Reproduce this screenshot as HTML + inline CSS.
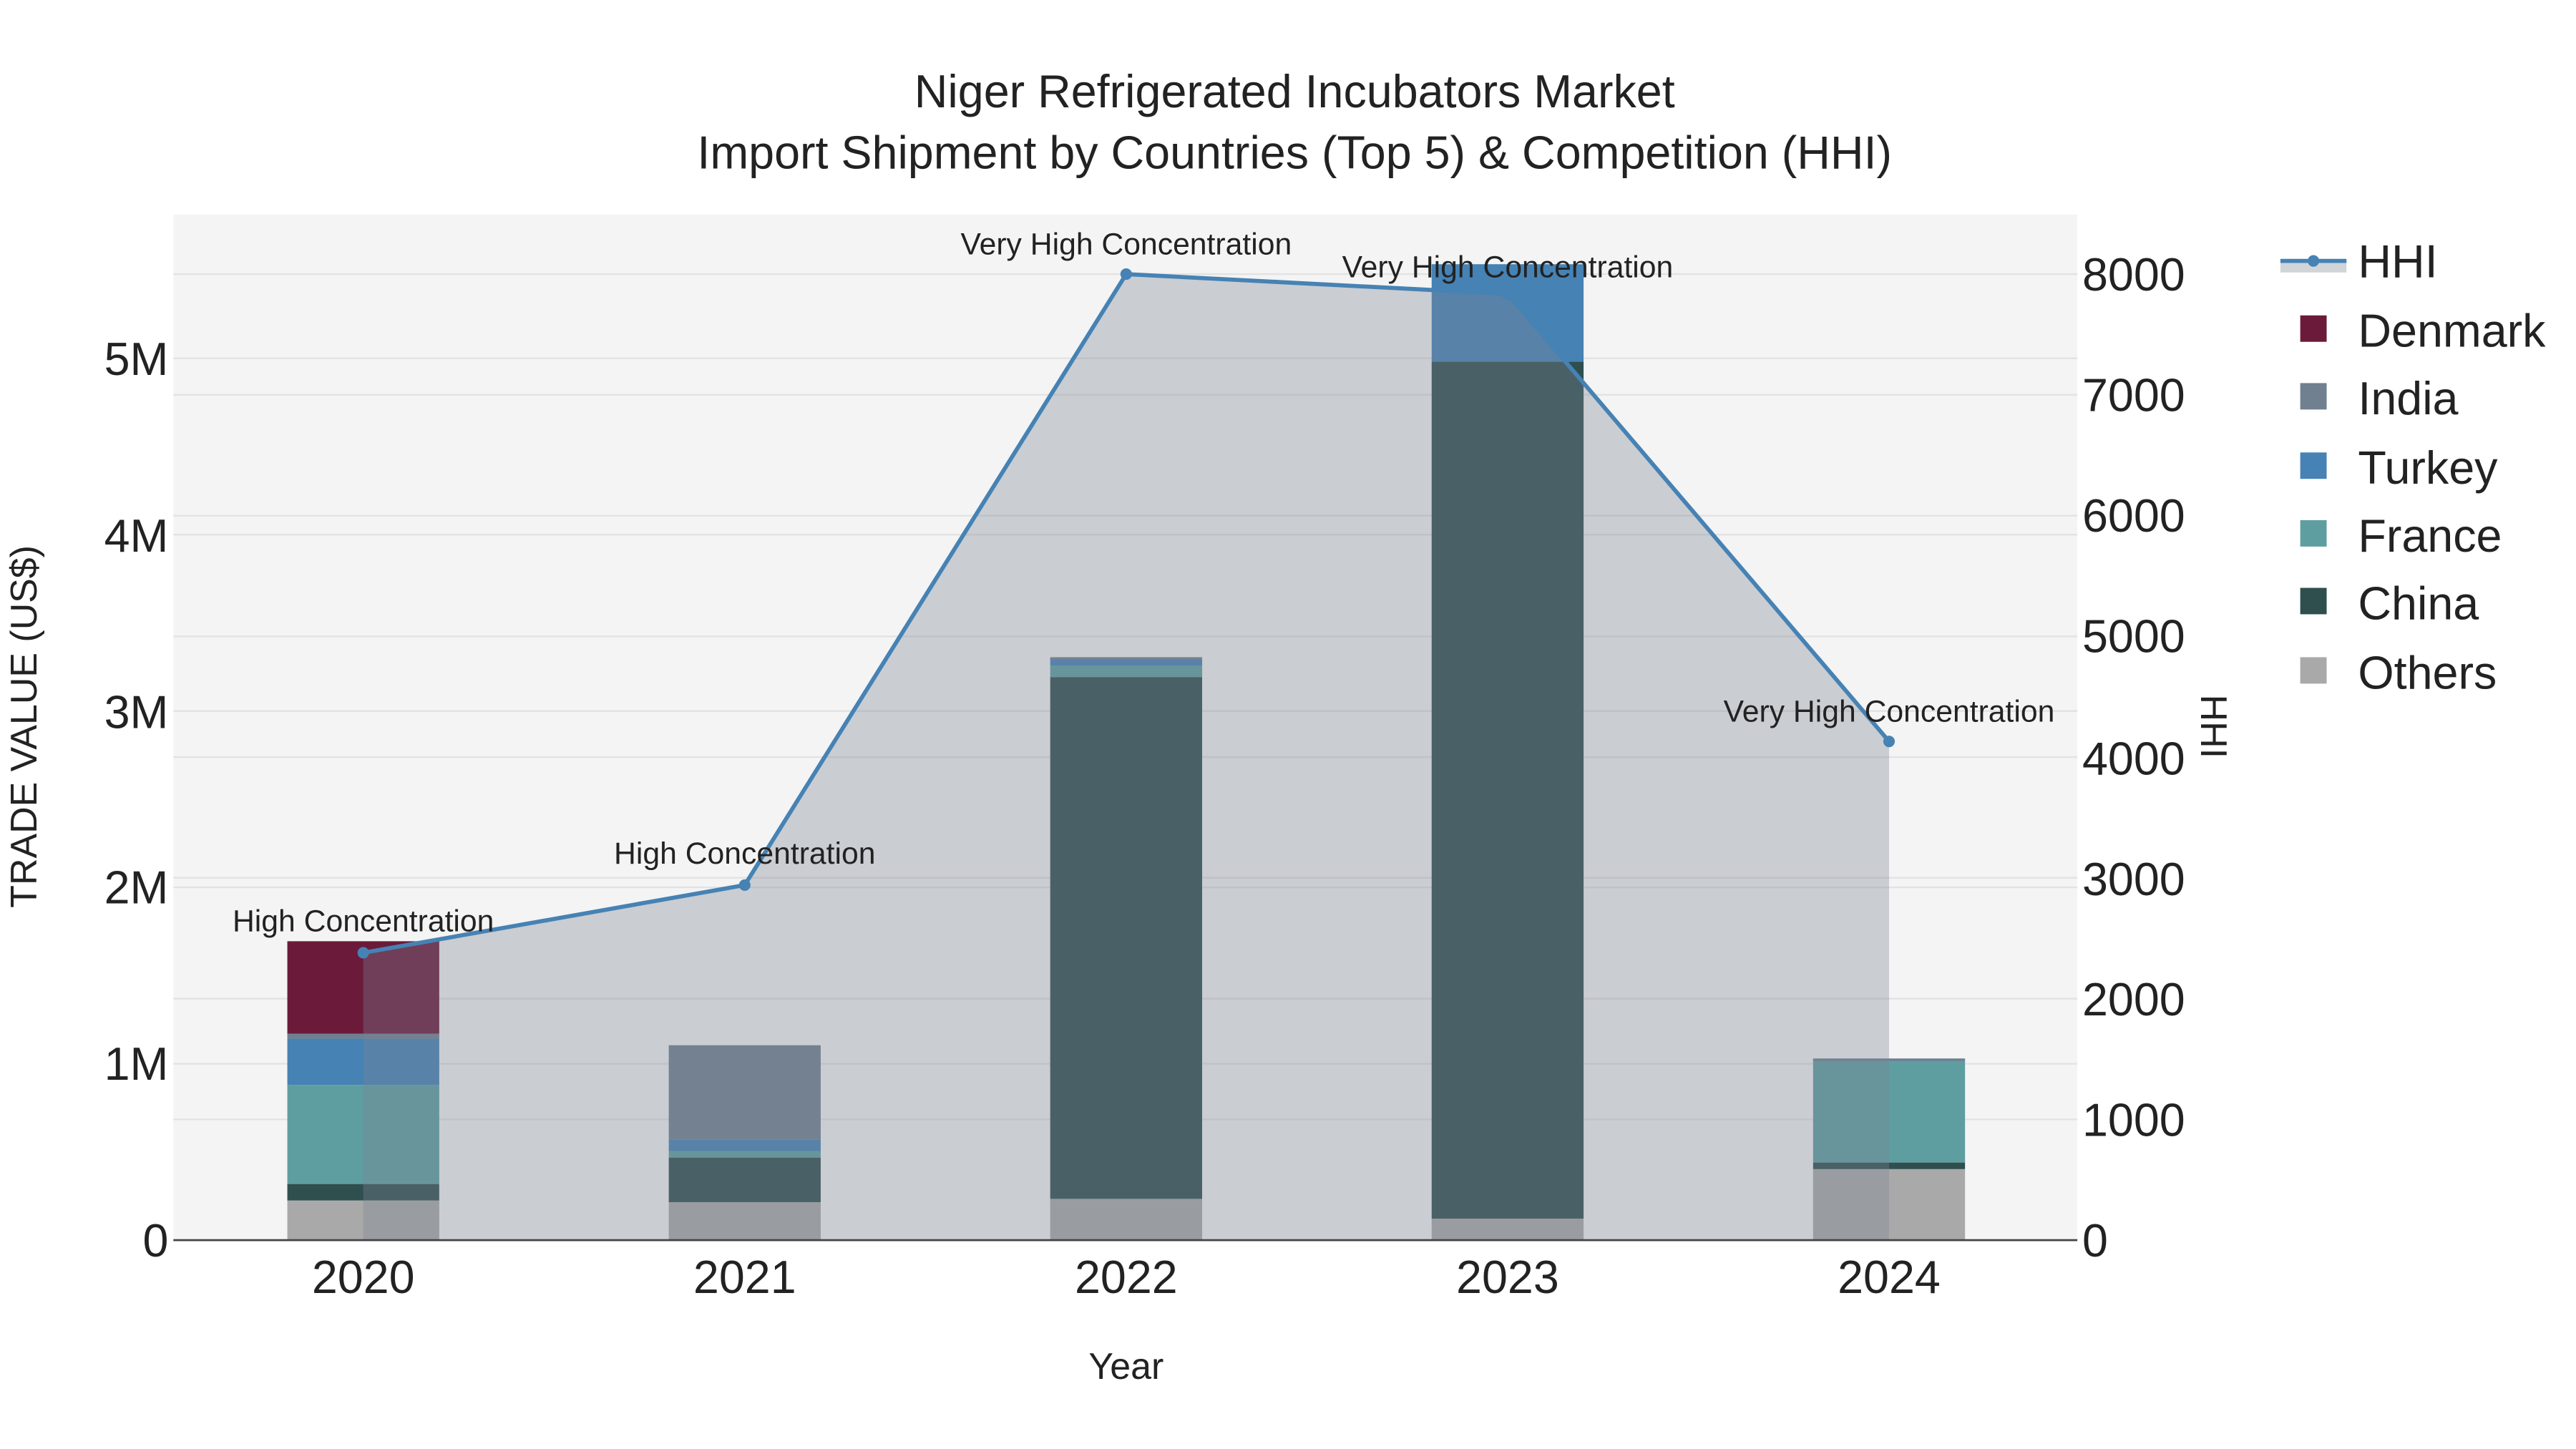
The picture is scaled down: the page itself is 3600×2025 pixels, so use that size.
<!DOCTYPE html>
<html><head><meta charset="utf-8"><style>
html,body{margin:0;padding:0;background:#fff;}
svg{display:block;}
text{font-family:"Liberation Sans",sans-serif;fill:#222;}
</style></head><body>
<svg width="3600" height="2025" viewBox="0 0 1560 877.5" xmlns="http://www.w3.org/2000/svg">
<rect x="0" y="0" width="1560" height="877.5" fill="#fff"/>
<rect x="105" y="130" width="1153" height="621" fill="#f4f4f4"/>
<g stroke="#e2e2e2" stroke-width="1">
<line x1="105" x2="1258" y1="644.2" y2="644.2"/><line x1="105" x2="1258" y1="537.4" y2="537.4"/>
<line x1="105" x2="1258" y1="430.6" y2="430.6"/><line x1="105" x2="1258" y1="323.8" y2="323.8"/>
<line x1="105" x2="1258" y1="217" y2="217"/>
<line x1="105" x2="1258" y1="677.9" y2="677.9"/><line x1="105" x2="1258" y1="604.8" y2="604.8"/>
<line x1="105" x2="1258" y1="531.6" y2="531.6"/><line x1="105" x2="1258" y1="458.5" y2="458.5"/>
<line x1="105" x2="1258" y1="385.4" y2="385.4"/><line x1="105" x2="1258" y1="312.3" y2="312.3"/>
<line x1="105" x2="1258" y1="239.1" y2="239.1"/><line x1="105" x2="1258" y1="166" y2="166"/>
</g>
<g>
<rect x="174" y="727" width="92" height="24" fill="#a9a9a9"/>
<rect x="174" y="717" width="92" height="10" fill="#2f4f4f"/>
<rect x="174" y="657" width="92" height="60" fill="#5f9ea0"/>
<rect x="174" y="629" width="92" height="28" fill="#4682b4"/>
<rect x="174" y="626" width="92" height="3" fill="#708090"/>
<rect x="174" y="570" width="92" height="56" fill="#6b1a3a"/>

<rect x="405" y="728" width="92" height="23" fill="#a9a9a9"/>
<rect x="405" y="701" width="92" height="27" fill="#2f4f4f"/>
<rect x="405" y="697" width="92" height="4" fill="#5f9ea0"/>
<rect x="405" y="690" width="92" height="7" fill="#4682b4"/>
<rect x="405" y="633" width="92" height="57" fill="#708090"/>

<rect x="636" y="726" width="92" height="25" fill="#a9a9a9"/>
<rect x="636" y="410" width="92" height="316" fill="#2f4f4f"/>
<rect x="636" y="403" width="92" height="7" fill="#5f9ea0"/>
<rect x="636" y="399" width="92" height="4" fill="#4682b4"/>
<rect x="636" y="398" width="92" height="1.5" fill="#708090"/>

<rect x="867" y="738" width="92" height="13" fill="#a9a9a9"/>
<rect x="867" y="219" width="92" height="519" fill="#2f4f4f"/>
<rect x="867" y="160" width="92" height="59" fill="#4682b4"/>

<rect x="1098" y="708" width="92" height="43" fill="#a9a9a9"/>
<rect x="1098" y="704" width="92" height="4" fill="#2f4f4f"/>
<rect x="1098" y="642" width="92" height="62" fill="#5f9ea0"/>
<rect x="1098" y="641" width="92" height="1.5" fill="#708090"/>
</g>
<path d="M220,751 L220,577 L451,536 L682,166 L913,178 L1144,449 L1144,751 Z" fill="#7b8391" fill-opacity="0.35"/>
<polyline points="220,577 451,536 682,166 913,178 1144,449" fill="none" stroke="#4682b4" stroke-width="2.5"/>
<g fill="#4682b4"><circle cx="220" cy="577" r="3.5"/><circle cx="451" cy="536" r="3.5"/><circle cx="682" cy="166" r="3.5"/><circle cx="913" cy="178" r="3.5"/><circle cx="1144" cy="449" r="3.5"/></g>
<line x1="105" x2="1258" y1="751" y2="751" stroke="#444" stroke-width="1.2"/>
<g font-size="18.5" text-anchor="middle">
<text x="220" y="564">High Concentration</text>
<text x="451" y="523">High Concentration</text>
<text x="682" y="154">Very High Concentration</text>
<text x="913" y="168">Very High Concentration</text>
<text x="1144" y="437">Very High Concentration</text>
</g>
<g font-size="28" text-anchor="middle">
<text x="784" y="65">Niger Refrigerated Incubators Market</text>
<text x="784" y="102">Import Shipment by Countries (Top 5) &amp; Competition (HHI)</text>
</g>
<g font-size="28" text-anchor="end">
<text x="102" y="761">0</text><text x="102" y="654">1M</text><text x="102" y="547">2M</text>
<text x="102" y="441">3M</text><text x="102" y="334">4M</text><text x="102" y="227">5M</text>
</g>
<g font-size="28" text-anchor="start">
<text x="1261" y="761">0</text><text x="1261" y="688">1000</text><text x="1261" y="615">2000</text>
<text x="1261" y="542">3000</text><text x="1261" y="469">4000</text><text x="1261" y="395">5000</text>
<text x="1261" y="322">6000</text><text x="1261" y="249">7000</text><text x="1261" y="176">8000</text>
</g>
<g font-size="28" text-anchor="middle">
<text x="220" y="783">2020</text><text x="451" y="783">2021</text><text x="682" y="783">2022</text>
<text x="913" y="783">2023</text><text x="1144" y="783">2024</text>
</g>
<text x="682" y="835" font-size="22.5" text-anchor="middle">Year</text>
<text transform="translate(22,440) rotate(-90)" font-size="22.5" text-anchor="middle">TRADE VALUE (US$)</text>
<text transform="translate(1333,440) rotate(90)" font-size="22.5" text-anchor="middle">HHI</text>
<rect x="1381" y="157" width="40" height="8" fill="#7b8391" fill-opacity="0.35"/>
<line x1="1381" x2="1421" y1="158" y2="158" stroke="#4682b4" stroke-width="2.5"/>
<circle cx="1401" cy="158" r="3.5" fill="#4682b4"/>
<g font-size="28">
<text x="1428" y="168">HHI</text>
<rect x="1393" y="191" width="16" height="16" fill="#6b1a3a"/><text x="1428" y="210">Denmark</text>
<rect x="1393" y="232" width="16" height="16" fill="#708090"/><text x="1428" y="251">India</text>
<rect x="1393" y="274" width="16" height="16" fill="#4682b4"/><text x="1428" y="293">Turkey</text>
<rect x="1393" y="315" width="16" height="16" fill="#5f9ea0"/><text x="1428" y="334">France</text>
<rect x="1393" y="356" width="16" height="16" fill="#2f4f4f"/><text x="1428" y="375">China</text>
<rect x="1393" y="398" width="16" height="16" fill="#a9a9a9"/><text x="1428" y="417">Others</text>
</g>
</svg>
</body></html>
